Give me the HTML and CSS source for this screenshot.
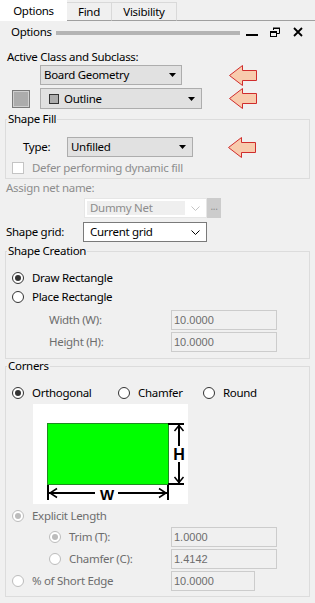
FILE: index.html
```html
<!DOCTYPE html>
<html>
<head>
    <title>Options</title>
    <link rel="stylesheet" href="styles.css">
</head>
<body>
    <div class="tabs">
        <div class="tab tab-options active">Options</div>
        <div class="tab tab-find">Find</div>
        <div class="tab tab-visibility">Visibility</div>
        <div class="tab-fill"></div>
    </div>
    <div class="titlebar">
        <span class="title">Options</span>
        <span class="grip"></span>
        <svg class="win-btn btn-min" width="12" height="10" viewBox="0 0 12 10"><rect x="0" y="7" width="12" height="2" fill="#000"/></svg>
        <svg class="win-btn btn-restore" width="10" height="10" viewBox="0 0 10 10"><path d="M3.5 3 V1.5 H9.5 V6.5 H7" fill="none" stroke="#000"/><rect x="3" y="0.5" width="7" height="1.5" fill="#000"/><rect x="0.5" y="4.5" width="6" height="5" fill="none" stroke="#000"/><rect x="0" y="4" width="7" height="2" fill="#000"/></svg>
        <svg class="win-btn btn-close" width="10" height="10" viewBox="0 0 10 10"><path d="M1 1 L9 9 M9 1 L1 9" stroke="#000" stroke-width="1.8"/></svg>
    </div>

    <div class="label label-active">Active Class and Subclass:</div>
    <div class="row row-class">
        <div class="dropdown dd-class">
            <span>Board Geometry</span>
            <svg class="caret" width="7" height="4" viewBox="0 0 7 4"><polygon points="0,0 7,0 3.5,4" fill="#000"/></svg>
        </div>
        <svg class="pointer pointer-1" width="28" height="21" viewBox="0 0 28 21"><polygon points="0.5,10.5 13.5,0.5 13.5,5.5 27.5,5.5 27.5,15.5 13.5,15.5 13.5,20.5" fill="#f8cbad" stroke="#d02c2c"/></svg>
    </div>
    <div class="row row-subclass">
        <span class="swatch"></span>
        <div class="dropdown dd-subclass">
            <span class="mini-swatch"></span>
            <span>Outline</span>
            <svg class="caret" width="7" height="4" viewBox="0 0 7 4"><polygon points="0,0 7,0 3.5,4" fill="#000"/></svg>
        </div>
        <svg class="pointer pointer-2" width="28" height="21" viewBox="0 0 28 21"><polygon points="0.5,10.5 13.5,0.5 13.5,5.5 27.5,5.5 27.5,15.5 13.5,15.5 13.5,20.5" fill="#f8cbad" stroke="#d02c2c"/></svg>
    </div>

    <fieldset class="group group-fill">
        <legend>Shape Fill</legend>
        <div class="row row-type">
            <span class="type-label">Type:</span>
            <div class="dropdown dd-type">
                <span>Unfilled</span>
                <svg class="caret" width="7" height="4" viewBox="0 0 7 4"><polygon points="0,0 7,0 3.5,4" fill="#000"/></svg>
            </div>
            <svg class="pointer pointer-3" width="28" height="21" viewBox="0 0 28 21"><polygon points="0.5,10.5 13.5,0.5 13.5,5.5 27.5,5.5 27.5,15.5 13.5,15.5 13.5,20.5" fill="#f8cbad" stroke="#d02c2c"/></svg>
        </div>
        <div class="opt-row row-defer">
            <span class="checkbox"></span>
            <span class="muted">Defer performing dynamic fill</span>
        </div>
    </fieldset>

    <div class="label label-net muted">Assign net name:</div>
    <div class="row row-net">
        <div class="combo-off">
            <span class="combo-off-text">Dummy Net</span>
            <svg class="chev" width="9" height="5" viewBox="0 0 9 5"><polyline points="0.5,0.5 4.5,4.5 8.5,0.5" fill="none" stroke="#c4c4c4"/></svg>
        </div>
        <div class="dots">...</div>
    </div>
    <div class="row row-grid">
        <span class="grid-label">Shape grid:</span>
        <div class="combo">
            <span>Current grid</span>
            <svg class="chev" width="9" height="5" viewBox="0 0 9 5"><polyline points="0.5,0.5 4.5,4.5 8.5,0.5" fill="none" stroke="#000"/></svg>
        </div>
    </div>

    <fieldset class="group group-create">
        <legend>Shape Creation</legend>
        <div class="opt-row row-draw">
            <span class="radio on"></span>
            <span>Draw Rectangle</span>
        </div>
        <div class="opt-row row-place">
            <span class="radio"></span>
            <span>Place Rectangle</span>
        </div>
        <div class="row field-row row-width">
            <span class="field-label muted-dark">Width (W):</span>
            <span class="field">10.0000</span>
        </div>
        <div class="row field-row row-height">
            <span class="field-label muted-dark">Height (H):</span>
            <span class="field">10.0000</span>
        </div>
    </fieldset>

    <fieldset class="group group-corners">
        <legend>Corners</legend>
        <div class="opt-row row-corners">
            <span class="corner-opt corner-orth"><span class="radio on"></span><span>Orthogonal</span></span>
            <span class="corner-opt corner-chamfer"><span class="radio"></span><span>Chamfer</span></span>
            <span class="corner-opt"><span class="radio"></span><span>Round</span></span>
        </div>
        <svg class="corner-pic" width="155" height="100" viewBox="0 0 155 100">
            <rect width="155" height="100" fill="#fff"/>
            <rect x="14.5" y="19.5" width="121" height="61" fill="#00ff00" stroke="#1e8c1e"/>
            <g stroke="#000" stroke-width="2" fill="none">
                <path d="M135 20 H151 M135 80 H151"/>
                <path d="M146 21 V42 M146 58 V79"/>
                <path d="M15 81 V96 M135 81 V96"/>
                <path d="M16 89 H62 M85 89 H134"/>
            </g>
            <g stroke="#000" stroke-width="1.5" fill="none">
                <path d="M141.5 27 L146 21.5 L150.5 27 M141.5 73 L146 78.5 L150.5 73"/>
                <path d="M24 84.5 L17 89 L24 93.5 M126 84.5 L133 89 L126 93.5"/>
            </g>
            <text x="146" y="56" text-anchor="middle" class="pic-letter pic-h">H</text>
            <text x="74" y="96" text-anchor="middle" class="pic-letter pic-w">W</text>
        </svg>
        <div class="opt-row row-explicit">
            <span class="radio on off"></span>
            <span class="muted-dark">Explicit Length</span>
        </div>
        <div class="row field-row row-trim">
            <span class="field-label sub-opt"><span class="radio on off"></span><span class="muted-dark">Trim (T):</span></span>
            <span class="field">1.0000</span>
        </div>
        <div class="row field-row row-chamfer">
            <span class="field-label sub-opt"><span class="radio off"></span><span class="muted-dark">Chamfer (C):</span></span>
            <span class="field">1.4142</span>
        </div>
        <div class="row field-row row-percent">
            <span class="field-label pct-opt"><span class="radio off"></span><span class="muted-dark">% of Short Edge</span></span>
            <span class="field field-short">10.0000</span>
        </div>
    </fieldset>
</body>
</html>
```

FILE: styles.css
```css
body {
    margin: 0;
    width: 315px;
    height: 603px;
    overflow: hidden;
    background: #f0f0f0;
    font-family: "Noto Sans", "Open Sans", sans-serif;
    font-size: 11.5px;
    letter-spacing: -0.3px;
    line-height: 14px;
    color: #000;
}

/* tab strip */
.tabs {
    display: flex;
    align-items: flex-end;
    height: 21px;
}
.tab {
    box-sizing: border-box;
    height: 19px;
    line-height: 17px;
    text-align: center;
    border: 1px solid #d9d9d9;
    border-left: none;
    border-bottom-color: #a0a0a0;
}
.tab.active {
    height: 21px;
    line-height: 21px;
    background: #fff;
    border: none;
}
.tab-options { width: 67px; }
.tab-find { width: 45px; }
.tab-visibility { width: 65px; }
.tab-fill {
    flex: 1;
    height: 1px;
    background: #a0a0a0;
}

/* docked window title */
.titlebar {
    display: flex;
    align-items: center;
    height: 22px;
    padding-left: 11px;
}
.grip {
    flex: 1;
    height: 4px;
    margin: 1px 6px 0 4px;
    background: #b4b4b4;
}
.btn-min { margin-right: 12px; }
.btn-restore { margin-right: 13px; }
.btn-close { margin-right: 12px; }

.row {
    display: flex;
    align-items: center;
}
.label {
    height: 14px;
}
.label-active {
    margin: 7px 0 0 7px;
}
.muted { color: #8d8d8d; }
.muted-dark { color: #6d6d6d; }

/* drop-down lists */
.dropdown {
    box-sizing: border-box;
    display: flex;
    align-items: center;
    height: 20px;
    padding-left: 3px;
    border: 1px solid #adadad;
    background: #e1e1e1;
}
.dropdown .caret {
    margin-left: auto;
}
.row-class {
    height: 20px;
    margin-top: 1px;
    padding-left: 40px;
}
.dd-class { width: 142px; }
.dd-class .caret { margin-right: 5px; }
.pointer-1 { margin-left: 47px; }

.row-subclass {
    height: 21px;
    margin-top: 3px;
    padding-left: 12px;
}
.swatch {
    box-sizing: border-box;
    width: 18px;
    height: 18px;
    margin-right: 10px;
    border: 1px solid #7a7a7a;
    background: #acacac;
    box-shadow: inset 0 0 0 1px #cfcfcf;
}
.dd-subclass {
    width: 162px;
    height: 21px;
    padding-left: 8px;
}
.mini-swatch {
    box-sizing: border-box;
    width: 10px;
    height: 10px;
    margin-right: 5px;
    border: 1px solid #333;
    background: #acacac;
}
.dd-subclass .caret { margin-right: 6px; }
.pointer-2 { margin-left: 27px; }

/* group boxes */
.group {
    margin: 3px 5px 0 5px;
    padding: 0;
    border: 1px solid #dcdcdc;
    min-width: 0;
}
.group legend {
    margin-left: 1px;
    padding: 0 1px;
    line-height: 14px;
}
.group-fill { padding-bottom: 3px; }
.row-type {
    height: 20px;
    margin-top: 11px;
    padding-left: 17px;
}
.type-label { width: 44px; }
.dd-type { width: 126px; }
.dd-type .caret { margin-right: 6px; }
.pointer-3 { margin-left: 35px; }

.opt-row {
    display: flex;
    align-items: center;
    height: 14px;
    padding-left: 6px;
}
.row-defer { margin-top: 4px; }
.checkbox {
    box-sizing: border-box;
    width: 12px;
    height: 12px;
    margin-right: 8px;
    border: 1px solid #c4c4c4;
    background: #fff;
}

.label-net { margin: 2px 0 0 6px; }
.row-net {
    height: 20px;
    margin-top: 3px;
    padding-left: 84px;
}
.combo-off {
    box-sizing: border-box;
    display: flex;
    align-items: center;
    width: 123px;
    height: 20px;
    padding: 2px;
    border: 1px solid #e6e6e6;
    background: #fff;
}
.combo-off-text {
    flex: 1;
    height: 14px;
    padding-left: 3px;
    margin-right: 6px;
    background: #efefef;
    color: #8d8d8d;
}
.combo-off .chev { margin-right: 4px; }
.dots {
    width: 14px;
    height: 20px;
    line-height: 16px;
    text-align: center;
    background: #cccccc;
    color: #8d8d8d;
    font-size: 10px;
}

.row-grid {
    height: 20px;
    margin-top: 4px;
    padding-left: 6px;
}
.grid-label { width: 77px; }
.combo {
    box-sizing: border-box;
    display: flex;
    align-items: center;
    width: 124px;
    height: 20px;
    padding-left: 6px;
    border: 1px solid #7a7a7a;
    background: #fff;
}
.combo .chev {
    margin: 0 6px 0 auto;
}

/* radios */
.radio {
    box-sizing: border-box;
    display: inline-flex;
    align-items: center;
    justify-content: center;
    flex: none;
    width: 12px;
    height: 12px;
    margin-right: 8px;
    border: 1px solid #333;
    border-radius: 50%;
    background: #fff;
}
.radio.on::after {
    content: "";
    width: 6px;
    height: 6px;
    border-radius: 50%;
    background: #333;
}
.radio.off {
    border-color: #bcbcbc;
}
.radio.off::after {
    background: #bcbcbc;
}

.group-create { margin-top: 2px; padding-bottom: 6px; }
.row-draw { margin-top: 13px; }
.row-place { margin-top: 5px; }

.field-row {
    height: 20px;
    padding-left: 43px;
    margin-top: 2px;
}
.row-width { margin-top: 6px; }
.field-label {
    display: flex;
    align-items: center;
    width: 122px;
}
.field {
    box-sizing: border-box;
    width: 106px;
    height: 20px;
    padding-left: 2px;
    border: 1px solid #cccccc;
    background: #f0f0f0;
    color: #6d6d6d;
    font-family: "Liberation Sans", Arial, sans-serif;
    font-size: 11px;
    letter-spacing: 0;
    line-height: 19px;
}
.field-short { width: 84px; }

.group-corners { margin-top: 0; padding-bottom: 5px; }
.row-corners { margin-top: 13px; }
.corner-opt {
    display: flex;
    align-items: center;
}
.corner-orth { width: 106px; }
.corner-chamfer { width: 85px; }
.corner-pic {
    display: block;
    margin: 4px 0 0 27px;
}
.pic-letter {
    font-family: "Liberation Sans", Arial, sans-serif;
    font-weight: bold;
    letter-spacing: 0;
}
.pic-h { font-size: 16px; }
.pic-w { font-size: 15px; }
.row-explicit { margin-top: 5px; }
.row-trim { margin-top: 4px; }
.pct-opt {
    width: 159px;
    margin-left: -37px;
}
```
